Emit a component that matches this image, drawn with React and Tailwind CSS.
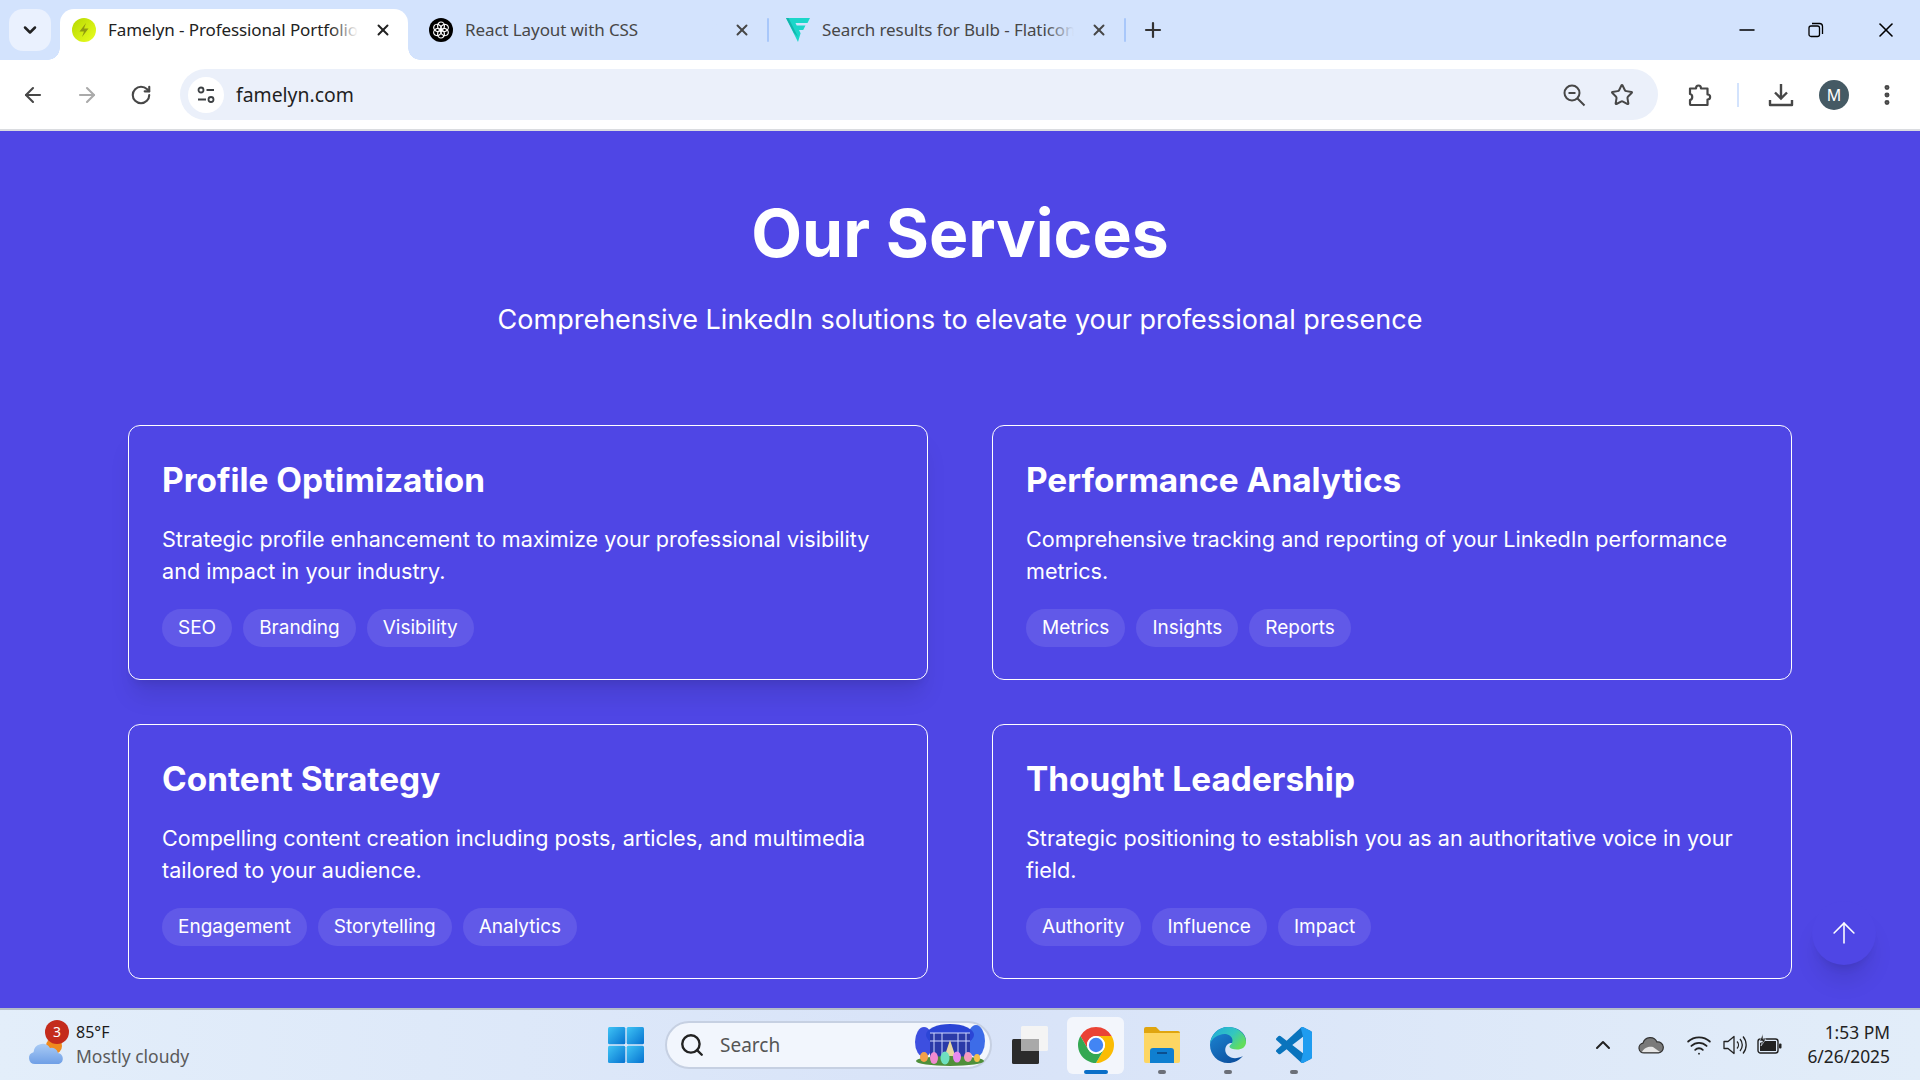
import React from 'react';
import { ArrowLeft, ArrowRight, RotateCw, Star, EllipsisVertical, X, Plus, ChevronDown, ChevronUp, ArrowUp, Minus, Search, Wifi } from 'lucide-react';

const services = [
  {
    title: 'Profile Optimization',
    text: 'Strategic profile enhancement to maximize your professional visibility and impact in your industry.',
    tags: ['SEO', 'Branding', 'Visibility'],
    hovered: true,
  },
  {
    title: 'Performance Analytics',
    text: 'Comprehensive tracking and reporting of your LinkedIn performance metrics.',
    tags: ['Metrics', 'Insights', 'Reports'],
  },
  {
    title: 'Content Strategy',
    text: 'Compelling content creation including posts, articles, and multimedia tailored to your audience.',
    tags: ['Engagement', 'Storytelling', 'Analytics'],
  },
  {
    title: 'Thought Leadership',
    text: 'Strategic positioning to establish you as an authoritative voice in your field.',
    tags: ['Authority', 'Influence', 'Impact'],
  },
];

const FamelynIcon = () => (
  <svg width="24" height="24" viewBox="0 0 24 24">
    <defs>
      <linearGradient id="fam" x1="0" y1="0" x2="1" y2="1">
        <stop offset="0" stopColor="#b6d800" />
        <stop offset="1" stopColor="#eaff20" />
      </linearGradient>
    </defs>
    <circle cx="12" cy="12" r="12" fill="url(#fam)" />
    <path d="M14 5 7.500 13.500H12L10 19l6.500-8.500H12z" fill="#8f9a10" />
  </svg>
);

const GptIcon = () => (
  <svg width="24" height="24" viewBox="0 0 24 24">
    <circle cx="12" cy="12" r="12" fill="#000" />
    <g fill="none" stroke="#fff" strokeWidth="1.200">
      <ellipse cx="12" cy="8" rx="3.400" ry="4" />
      <ellipse cx="12" cy="8" rx="3.400" ry="4" transform="rotate(60 12 12)" />
      <ellipse cx="12" cy="8" rx="3.400" ry="4" transform="rotate(120 12 12)" />
      <ellipse cx="12" cy="8" rx="3.400" ry="4" transform="rotate(180 12 12)" />
      <ellipse cx="12" cy="8" rx="3.400" ry="4" transform="rotate(240 12 12)" />
      <ellipse cx="12" cy="8" rx="3.400" ry="4" transform="rotate(300 12 12)" />
    </g>
  </svg>
);

const FlaticonIcon = () => (
  <svg width="24" height="24" viewBox="0 0 24 24">
    <path d="M0 0h24l-2.500 5H9.500l1.200 2.500h8.800l-2.300 4.600H13l1.600 3.200L12 24z" fill="#1bd6c9" />
    <path d="M2.500 0 12 19 8 15 0 0z" fill="#12b5ab" />
  </svg>
);

const SiteInfoIcon = () => (
  <svg width="20" height="20" viewBox="0 0 20 20" fill="none" stroke="#3c4043" strokeWidth="1.800">
    <circle cx="5" cy="5" r="2.500" />
    <path d="M10.500 5H18M2 14.500h8" />
    <circle cx="15" cy="14.500" r="2.500" />
  </svg>
);

const ZoomOutIcon = () => (
  <svg width="24" height="24" viewBox="0 0 24 24" fill="none" stroke="#474747" strokeWidth="2">
    <circle cx="10" cy="10" r="7.500" />
    <path d="M6.500 10h7M15.500 15.500l7 7" />
  </svg>
);

const PuzzleIcon = () => (
  <svg width="26" height="26" viewBox="0 0 26 26" fill="none" stroke="#474747" strokeWidth="2.200" strokeLinejoin="round">
    <path d="M4 6.500h6c0-4 5-4 5 0h6.500v6c3.500 0 3.500 5 0 5v5.500H4.500c-.5 0-.5-.5-.5-1v-4c3-.5 3-5.500 0-6z" />
  </svg>
);

const DownloadIcon = () => (
  <svg width="26" height="26" viewBox="0 0 26 26" fill="none" stroke="#474747" strokeWidth="2.400">
    <path d="M13 2v14M7 10.500l6 6 6-6" />
    <path d="M2 18v5h22v-5" strokeLinejoin="round" />
  </svg>
);

const RestoreIcon = () => (
  <svg width="16" height="16" viewBox="0 0 16 16" fill="none" stroke="#000" strokeWidth="1.300">
    <rect x="1" y="4" width="10.500" height="10.500" rx="2" />
    <path d="M4 1.500h7.500a3 3 0 0 1 3 3V12" />
  </svg>
);

const WeatherIcon = () => (
  <svg width="38" height="30" viewBox="0 0 38 30">
    <defs>
      <linearGradient id="cloud" x1="0" y1="0" x2="0" y2="1">
        <stop offset="0" stopColor="#a9cbf5" />
        <stop offset="1" stopColor="#6f9fe6" />
      </linearGradient>
    </defs>
    <circle cx="26" cy="10" r="8" fill="#f08a1d" />
    <path d="M7 28a6 6 0 0 1-1.500-11.800A9 9 0 0 1 22 12a6.500 6.500 0 0 1 8 5 5.700 5.700 0 0 1 1 11z" fill="url(#cloud)" />
  </svg>
);

const WindowsIcon = () => (
  <svg width="36" height="36" viewBox="0 0 36 36">
    <defs>
      <linearGradient id="win" x1="0" y1="0" x2="1" y2="1">
        <stop offset="0" stopColor="#3fc4f5" />
        <stop offset="1" stopColor="#0672d0" />
      </linearGradient>
    </defs>
    <rect x="0" y="0" width="17.300" height="17.300" rx="1.500" fill="url(#win)" />
    <rect x="18.700" y="0" width="17.300" height="17.300" rx="1.500" fill="url(#win)" />
    <rect x="0" y="18.700" width="17.300" height="17.300" rx="1.500" fill="url(#win)" />
    <rect x="18.700" y="18.700" width="17.300" height="17.300" rx="1.500" fill="url(#win)" />
  </svg>
);

const SearchArt = () => (
  <svg width="72" height="42" viewBox="0 0 72 42">
    <ellipse cx="10" cy="18" rx="9" ry="15" fill="#3d4fe0" />
    <ellipse cx="62" cy="17" rx="9" ry="16" fill="#3d6ce8" />
    <ellipse cx="36" cy="11" rx="24" ry="11" fill="#2b45d6" />
    <rect x="16" y="9" width="40" height="24" fill="#2a3aa8" />
    <path d="M16 9h40M20 9v24M28 9v24M44 9v24M52 9v24M16 17h40" stroke="#cfd8ff" strokeWidth="1" />
    <path d="M36 16 30 34h12z" fill="#e8d8a0" />
    <ellipse cx="36" cy="37" rx="34" ry="5" fill="#4f8f3a" />
    <ellipse cx="10" cy="33" rx="4" ry="5" fill="#f2a04a" />
    <ellipse cx="20" cy="34" rx="4" ry="6" fill="#f08ad0" />
    <ellipse cx="31" cy="34" rx="4.500" ry="6.500" fill="#6fe0c0" />
    <ellipse cx="43" cy="33" rx="4" ry="5.500" fill="#e88af0" />
    <ellipse cx="54" cy="33" rx="4" ry="5" fill="#f49ac0" />
    <ellipse cx="63" cy="34" rx="3" ry="4" fill="#f2c04a" />
  </svg>
);

const TaskViewIcon = () => (
  <svg width="36" height="38" viewBox="0 0 36 38">
    <rect x="0" y="13" width="27" height="25" rx="1.500" fill="#2b2b2b" />
    <rect x="9" y="0" width="27" height="25" rx="1.500" fill="#f4f4f4" />
    <rect x="9" y="13" width="18" height="12" fill="#a9a9a9" />
  </svg>
);

const ChromeIcon = () => (
  <svg width="36" height="36" viewBox="4 4 40 40">
    <path d="M24 4A20 20 0 0 1 41.320 14H24A10 10 0 0 0 15.340 29L6.680 14A20 20 0 0 1 24 4Z" fill="#ea4335" />
    <path d="M41.320 14A20 20 0 0 1 24 44L32.660 29A10 10 0 0 0 24 14Z" fill="#fbbc04" />
    <path d="M6.680 14A20 20 0 0 0 24 44L32.660 29A10 10 0 0 1 15.340 29Z" fill="#34a853" />
    <circle cx="24" cy="24" r="10" fill="#fff" />
    <circle cx="24" cy="24" r="8" fill="#4285f4" />
  </svg>
);

const FolderIcon = () => (
  <svg width="36" height="36" viewBox="0 0 36 36">
    <path d="M0 2a2 2 0 0 1 2-2h10l4 4h18a2 2 0 0 1 2 2v6H0z" fill="#e0a50f" />
    <path d="M0 6h36v28a2 2 0 0 1-2 2H2a2 2 0 0 1-2-2z" fill="#fdd663" />
    <path d="M6 36V24a3 3 0 0 1 3-3h18a3 3 0 0 1 3 3v12z" fill="#0f7fd0" />
    <rect x="13" y="25" width="10" height="2" fill="#0b4f8f" />
  </svg>
);

// blue swirl, green crest on top right, dark lower sweep
const EdgeIcon = () => (
  <svg width="36" height="36" viewBox="0 0 36 36">
    <defs>
      <linearGradient id="edgeTop" x1="0" y1="0" x2="1" y2="0.600">
        <stop offset="0" stopColor="#1fa8dc" />
        <stop offset="0.600" stopColor="#33c6c0" />
        <stop offset="1" stopColor="#62dd5c" />
      </linearGradient>
      <linearGradient id="edgeBottom" x1="0" y1="0" x2="0.700" y2="1">
        <stop offset="0" stopColor="#1d8ad8" />
        <stop offset="1" stopColor="#0c4f9e" />
      </linearGradient>
    </defs>
    <path d="M18 0C8 0 0 8 0 18c0 10 8 18 18 18 6 0 11-2.500 15-7-4 2-8 3-12 1.500-5-2-7-7-5-11 1-2 3-3.500 5-3.500 2.500 0 2 1 4 3 3 1 11 0 11-5C36 6 28 0 18 0z" fill="url(#edgeBottom)" />
    <path d="M0 17C1 7 9 0 18 0c10 0 18 7 18 15 0 5-4 7.500-9 7.500-4 0-7-1-7.500-2.500-.5-2 3-2.500 3-6.500 0-4-4-6.500-8-6.500C8 7.500 2 11 0 17z" fill="url(#edgeTop)" />
  </svg>
);

const VscodeIcon = () => (
  <svg width="36" height="36" viewBox="0 0 100 100">
    <path d="M96.500 10.800 75.900.9a6.200 6.200 0 0 0-7.100 1.200L29.500 38 12.400 25a4.200 4.200 0 0 0-5.300.2L1.600 30.300a4.200 4.200 0 0 0 0 6.200L16.400 50 1.600 63.500a4.200 4.200 0 0 0 0 6.200l5.500 5a4.200 4.200 0 0 0 5.300.3L29.500 62l39.300 35.900a6.200 6.200 0 0 0 7.100 1.200l20.600-9.900a6.200 6.200 0 0 0 3.500-5.600V16.400a6.200 6.200 0 0 0-3.500-5.600zM75 72.700 45.200 50 75 27.300z" fill="#0a74bd" />
    <path d="M68.800 2.100a6.200 6.200 0 0 1 7.100-1.200l20.600 9.900a6.200 6.200 0 0 1 3.500 5.600v67.200a6.200 6.200 0 0 1-3.500 5.600l-20.600 9.900a6.200 6.200 0 0 1-7.100-1.200L75 72.700V27.300z" fill="#1f9cf0" />
  </svg>
);

const OneDriveIcon = () => (
  <svg width="26" height="18" viewBox="0 0 26 18">
    <path d="M6 17a5 5 0 0 1-1-9.900A7.500 7.500 0 0 1 19 6a5.500 5.500 0 0 1 1.500 11z" fill="#7a7a7a" stroke="#333" strokeWidth="1.200" />
    <path d="M4 16c2-5 8-6 11-5l7 5z" fill="#e6e6e6" />
  </svg>
);

const SpeakerIcon = () => (
  <svg width="26" height="24" viewBox="0 0 26 24" fill="none" stroke="#222" strokeWidth="1.300">
    <path d="M2 8.500h4l6-5v17l-6-5H2z" strokeLinejoin="round" />
    <path d="M15 8.500a5 5 0 0 1 0 7M18 6a9 9 0 0 1 0 12M21 3.500a13 13 0 0 1 0 17" />
  </svg>
);

const BatteryIcon = () => (
  <svg width="26" height="22" viewBox="0 0 26 22">
    <rect x="1" y="5" width="20" height="14" rx="2.500" fill="none" stroke="#222" strokeWidth="1.400" />
    <path d="M3 17V9l4-2h12v10z" fill="#222" />
    <rect x="22" y="9.500" width="2.500" height="5" rx="1" fill="#222" />
    <path d="M6 0 2.500 7h3L4 12l5-7H6z" fill="#222" stroke="#e2edf9" strokeWidth=".6" />
  </svg>
);

const Tab = ({ icon, title, active, widthClass, textColor }) => (
  <div className={`relative flex h-full shrink-0 items-center pb-[9px] ${widthClass} ${active ? 'rounded-t-[14px] bg-white' : ''}`}>
    {active && (
      <>
        <span className="absolute bottom-0 left-[-12px] h-3 w-3 bg-[radial-gradient(circle_at_0_0,#d3e3fd_11.500px,#ffffff_12px)]" />
        <span className="absolute bottom-0 right-[-12px] h-3 w-3 bg-[radial-gradient(circle_at_100%_0,#d3e3fd_11.500px,#ffffff_12px)]" />
      </>
    )}
    <span className="ml-3 shrink-0">{icon}</span>
    <div className="relative ml-3 min-w-0 flex-1 overflow-hidden whitespace-nowrap">
      <span className={`text-[17px] leading-6 tracking-[-0.1px] ${textColor}`}>{title}</span>
      <span className={`absolute inset-y-0 right-0 w-7 bg-gradient-to-r from-transparent ${active ? 'to-white' : 'to-[#d3e3fd]'}`} />
    </div>
    <X size={18} strokeWidth={2.600} className={`mx-4 shrink-0 ${active ? 'text-[#222]' : 'text-[#474747]'}`} />
  </div>
);

const TabStrip = () => (
  <div className="flex h-[60px] shrink-0 bg-[#d3e3fd] pt-[9px]">
    <div className="ml-[9px] mr-[9px] flex h-[42px] w-[42px] items-center justify-center rounded-[14px] bg-[#eaf1fe]">
      <ChevronDown size={20} strokeWidth={3} className="text-[#222]" />
    </div>
    <Tab icon={<FamelynIcon />} title="Famelyn - Professional Portfolio" active widthClass="w-[348px]" textColor="text-[#222]" />
    <div className="w-[9px] shrink-0" />
    <Tab icon={<GptIcon />} title="React Layout with CSS" widthClass="w-[350px]" textColor="text-[#474747]" />
    <span className="mt-[9px] h-6 w-0.5 shrink-0 rounded bg-[#a8c7fa]" />
    <div className="w-[5px] shrink-0" />
    <Tab icon={<FlaticonIcon />} title="Search results for Bulb - Flaticon" widthClass="w-[350px]" textColor="text-[#474747]" />
    <span className="mt-[9px] h-6 w-0.5 shrink-0 rounded bg-[#a8c7fa]" />
    <Plus size={24} strokeWidth={2.200} className="ml-[15px] mt-[9px] text-[#333]" />
    <div className="flex-1" />
    <div className="mr-[22px] mt-[9px] flex h-6 items-start">
      <Minus size={24} strokeWidth={1.500} className="text-black" />
      <span className="ml-[49px] mt-1"><RestoreIcon /></span>
      <X size={24} strokeWidth={1.600} className="ml-[50px] text-black" />
    </div>
  </div>
);

const Toolbar = () => (
  <div className="flex h-[69px] shrink-0 items-center rounded-t-xl bg-white pl-[21px]">
    <ArrowLeft size={24} strokeWidth={2.100} className="text-[#474747]" />
    <ArrowRight size={24} strokeWidth={2.100} className="ml-[30px] text-[#aaaaaa]" />
    <RotateCw size={22} strokeWidth={2.300} className="ml-[31px] text-[#474747]" />
    <div className="ml-[28px] flex h-[51px] w-[1478px] items-center rounded-full bg-[#ebf0fa] pl-2 pr-[24px]">
      <div className="flex h-9 w-9 items-center justify-center rounded-full bg-white">
        <SiteInfoIcon />
      </div>
      <span className="ml-3 font-['Noto_Sans',sans-serif] text-[19.400px] text-[#1f1f1f]">famelyn.com</span>
      <div className="flex-1" />
      <ZoomOutIcon />
      <Star size={24} strokeWidth={2} className="ml-6 text-[#474747]" />
    </div>
    <span className="ml-[28px]"><PuzzleIcon /></span>
    <span className="ml-[25px] h-6 w-0.5 bg-[#d3e3fd]" />
    <span className="ml-[29px]"><DownloadIcon /></span>
    <div className="ml-[25px] flex h-[30px] w-[30px] items-center justify-center rounded-full bg-[#455a64] text-base text-white">M</div>
    <EllipsisVertical size={26} strokeWidth={2.600} className="ml-[25px] text-[#474747]" />
  </div>
);

const ServiceCard = ({ service }) => (
  <div className={`rounded-xl border border-white px-[33px] pb-[32px] pt-[32px] ${service.hovered ? 'shadow-xl' : ''}`}>
    <h3 className="text-[33.400px] font-bold leading-[44px] text-white">{service.title}</h3>
    <p className="mt-[21px] text-[21.600px] leading-8 text-white">{service.text}</p>
    <div className="mt-[22px] flex gap-[11px]">
      {service.tags.map((tag) => (
        <span key={tag} className="flex h-[38px] items-center rounded-full bg-white/10 px-4 text-[19px] text-white">
          {tag}
        </span>
      ))}
    </div>
  </div>
);

const ServicesPage = () => (
  <main className="relative flex-1 overflow-hidden bg-[#4f46e5] px-[128px] pt-16 font-['Inter',sans-serif]">
    <h1 className="text-center text-[66px] font-bold leading-[77px] text-white">Our Services</h1>
    <p className="mt-[25px] text-center text-[27px] leading-[45px] text-white">
      Comprehensive LinkedIn solutions to elevate your professional presence
    </p>
    <div className="mt-[83px] grid grid-cols-2 gap-x-16 gap-y-11">
      {services.map((service) => (
        <ServiceCard key={service.title} service={service} />
      ))}
    </div>
    <div className="absolute left-[1812px] top-[770px] flex h-16 w-16 items-center justify-center rounded-full bg-[#4f46e5] shadow-xl">
      <ArrowUp size={34} strokeWidth={1.100} className="text-white" />
    </div>
  </main>
);

const TaskbarApp = ({ children, dot, active }) => (
  <div className={`relative flex h-[57px] w-[57px] items-center justify-center rounded-md ${active ? 'bg-[#f3f6fc]' : ''}`}>
    {children}
    {dot && <span className={`absolute bottom-0 left-1/2 h-1 -translate-x-1/2 rounded-full ${active ? 'w-6 bg-[#0a6fc8]' : 'w-2 bg-[#6b6f78]'}`} />}
  </div>
);

const Taskbar = () => (
  <div className="flex h-[72px] shrink-0 items-center border-t-2 border-[#b4bcc8] bg-gradient-to-r from-[#e3eefa] via-[#d8e3f8] to-[#e2edf9] font-['Noto_Sans',sans-serif]">
    <div className="flex w-[608px] shrink-0 items-center pl-[28px]">
      <div className="relative mt-3">
        <WeatherIcon />
        <span className="absolute left-[17px] top-[-16px] flex h-6 w-6 items-center justify-center rounded-full bg-[#c42b1c] text-sm text-white">3</span>
      </div>
      <div className="ml-[10px] mb-0.5 flex flex-col">
        <span className="text-[16px] leading-6 text-[#1a1a1a]">85°F</span>
        <span className="text-[17.500px] leading-6 text-[#5a5a5a]">Mostly cloudy</span>
      </div>
    </div>
    <WindowsIcon />
    <div className="ml-[21px] flex h-12 w-[327px] items-center rounded-full border-2 border-[#c6d0e2] bg-[#f2f6fd] pl-3 pr-1">
      <Search size={26} strokeWidth={2.200} className="text-[#222]" />
      <span className="ml-[15px] text-[19px] text-[#555]">Search</span>
      <div className="flex-1" />
      <SearchArt />
    </div>
    <div className="ml-5"><TaskViewIcon /></div>
    <div className="ml-[19px] flex items-center gap-[9px]">
      <TaskbarApp active dot><ChromeIcon /></TaskbarApp>
      <TaskbarApp dot><FolderIcon /></TaskbarApp>
      <TaskbarApp dot><EdgeIcon /></TaskbarApp>
      <TaskbarApp dot><VscodeIcon /></TaskbarApp>
    </div>
    <div className="flex flex-1 items-center pl-[269px] pr-[30px]">
      <ChevronUp size={24} strokeWidth={2} className="text-[#222]" />
      <span className="ml-[23px]"><OneDriveIcon /></span>
      <Wifi size={26} strokeWidth={1.700} className="ml-[22px] text-[#222]" />
      <span className="ml-[10px]"><SpeakerIcon /></span>
      <span className="ml-[9px]"><BatteryIcon /></span>
      <div className="flex-1" />
      <div className="mb-0.5 flex flex-col items-end text-[17.400px] leading-6 text-[#222]">
        <span>1:53 PM</span>
        <span>6/26/2025</span>
      </div>
    </div>
  </div>
);

const App = () => (
  <div className="flex h-screen flex-col overflow-hidden font-['Noto_Sans',sans-serif]">
    <TabStrip />
    <Toolbar />
    <div className="h-0.5 shrink-0 bg-[#dadce0]" />
    <ServicesPage />
    <Taskbar />
  </div>
);

export default App;
